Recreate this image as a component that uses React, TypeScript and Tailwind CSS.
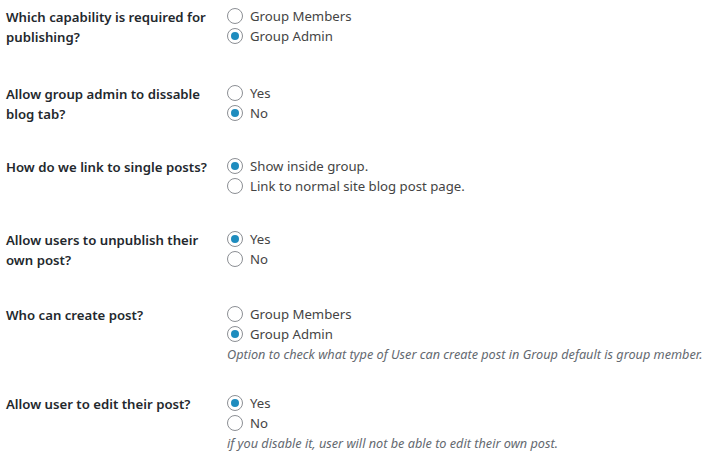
import React from 'react'

type Row = {
  label: string[]
  name: string
  options: string[]
  checked: number
  desc?: string
  mt: string
}

const rows: Row[] = [
  { label: ['Which capability is required for', 'publishing?'], name: 'cap', options: ['Group Members', 'Group Admin'], checked: 1, mt: 'mt-0' },
  { label: ['Allow group admin to dissable', 'blog tab?'], name: 'tab', options: ['Yes', 'No'], checked: 1, mt: 'mt-[36px]' },
  { label: ['How do we link to single posts?'], name: 'link', options: ['Show inside group.', 'Link to normal site blog post page.'], checked: 0, mt: 'mt-[32px]' },
  { label: ['Allow users to unpublish their', 'own post?'], name: 'unpub', options: ['Yes', 'No'], checked: 0, mt: 'mt-[33px]' },
  {
    label: ['Who can create post?'],
    name: 'create',
    options: ['Group Members', 'Group Admin'],
    checked: 1,
    desc: 'Option to check what type of User can create post in Group default is group member.',
    mt: 'mt-[34px]',
  },
  {
    label: ['Allow user to edit their post?'],
    name: 'edit',
    options: ['Yes', 'No'],
    checked: 0,
    desc: 'if you disable it, user will not be able to edit their own post.',
    mt: 'mt-[30px]',
  },
]

const Radio = ({ on }: { on: boolean }) => (
  <span className="flex h-4 w-4 shrink-0 items-center justify-center rounded-full border border-[#8c8f94] bg-white">
    {on && <span className="h-2 w-2 rounded-full bg-[#1e8cbe]" />}
  </span>
)

export default function App() {
  return (
    <div
      className="min-h-[459px] w-[715px] bg-white pt-[6px] text-[13.2px]"
      style={{ fontFamily: '"Noto Sans", "Open Sans", sans-serif' }}
    >
      {rows.map((row) => (
        <div key={row.name} className={`flex items-start ${row.mt}`}>
          <div className="w-[227px] shrink-0 pl-[6px] pt-px font-semibold leading-5 text-[#23282d]">
            {row.label.map((l) => (
              <div key={l}>{l}</div>
            ))}
          </div>
          <div className="flex flex-col">
            {row.options.map((o, i) => (
              <label key={o} className="flex h-5 items-center gap-[7px] text-[#444]">
                <Radio on={i === row.checked} />
                <span className="leading-5">{o}</span>
              </label>
            ))}
            {row.desc && (
              <p className="mt-px text-[12.7px] italic leading-[18px] text-[#646970]">{row.desc}</p>
            )}
          </div>
        </div>
      ))}
    </div>
  )
}
